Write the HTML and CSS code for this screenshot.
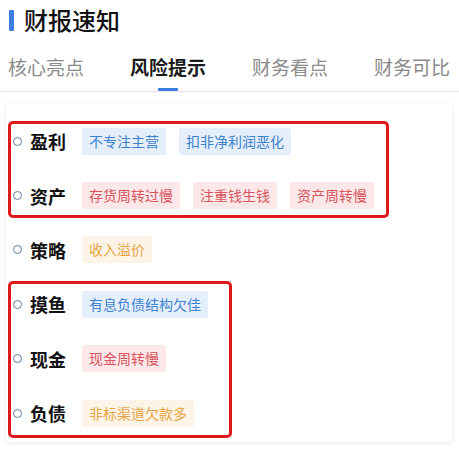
FILE: index.html
```html
<!DOCTYPE html>
<html lang="zh">
<head>
<meta charset="utf-8">
<link rel="stylesheet" href="styles.css">
</head>
<body>
<div class="page">
  <div class="header">
    <span class="header-bar"></span>
    <h1 class="title">财报速知</h1>
  </div>
  <div class="tabs">
    <div class="tab">核心亮点</div>
    <div class="tab tab-active">风险提示</div>
    <div class="tab">财务看点</div>
    <div class="tab">财务可比</div>
  </div>
  <div class="card">
    <div class="group group-a">
      <div class="row">
        <span class="dot"></span><span class="label">盈利</span>
        <div class="tags"><span class="tag tag-blue">不专注主营</span><span class="tag tag-blue">扣非净利润恶化</span></div>
      </div>
      <div class="row">
        <span class="dot"></span><span class="label">资产</span>
        <div class="tags"><span class="tag tag-red">存货周转过慢</span><span class="tag tag-red">注重钱生钱</span><span class="tag tag-red">资产周转慢</span></div>
      </div>
    </div>
    <div class="row">
      <span class="dot"></span><span class="label">策略</span>
      <div class="tags"><span class="tag tag-orange">收入溢价</span></div>
    </div>
    <div class="group group-b">
      <div class="row">
        <span class="dot"></span><span class="label">摸鱼</span>
        <div class="tags"><span class="tag tag-blue">有息负债结构欠佳</span></div>
      </div>
      <div class="row">
        <span class="dot"></span><span class="label">现金</span>
        <div class="tags"><span class="tag tag-red">现金周转慢</span></div>
      </div>
      <div class="row">
        <span class="dot"></span><span class="label">负债</span>
        <div class="tags"><span class="tag tag-orange">非标渠道欠款多</span></div>
      </div>
    </div>
  </div>
</div>
</body>
</html>
```

FILE: styles.css
```css
* { box-sizing: border-box; }
html, body { margin: 0; padding: 0; background: #ffffff; }
body {
  font-family: "Noto Sans CJK SC", "Noto Sans", sans-serif;
  color: #111;
  width: 459px;
  height: 453px;
  overflow: hidden;
}
.page { display: flex; flex-direction: column; }
.header {
  display: flex;
  align-items: center;
  gap: 10px;
  height: 40px;
  padding-left: 9px;
}
.header-bar {
  width: 5px;
  height: 21px;
  background: #3b7de0;
  border-radius: 1px;
}
.title {
  margin: 0;
  font-size: 24px;
  font-weight: 500;
  line-height: 40px;
  color: #111;
}
.tabs {
  display: flex;
  gap: 46px;
  padding-left: 8px;
  height: 52px;
  border-bottom: 1px solid #e6e6e6;
  white-space: nowrap;
}
.tab {
  position: relative;
  flex: none;
  width: 76px;
  font-size: 19px;
  color: #8a8a8a;
  padding-top: 3px;
  line-height: 48px;
}
.tab-active { color: #1a1a1a; font-weight: 700; }
.tab-active::after {
  content: "";
  position: absolute;
  left: 28px;
  bottom: 0;
  width: 20px;
  height: 3px;
  background: #3b7de0;
  border-radius: 1px;
}
.card {
  margin: 12px 7px 0 6px;
  padding: 10px 0 2px;
  background: #fff;
  box-shadow: 0 1px 4px rgba(0,0,0,0.10);
  border-radius: 2px;
}
.group { position: relative; }
.group::after {
  content: "";
  position: absolute;
  left: 2px;
  border: 3px solid #e0181b;
  border-radius: 5px;
  pointer-events: none;
}
.group-a::after { top: 7px; bottom: 5px; width: 375px; }
.group-b::after { top: 4px; bottom: 2px; width: 218px; }
.row {
  display: flex;
  align-items: center;
  height: 54.4px;
  padding-left: 7px;
}
.dot {
  flex: none;
  width: 9px;
  height: 9px;
  border: 1.5px solid #5a7ea8;
  border-radius: 50%;
}
.label {
  flex: none;
  width: 52px;
  margin-left: 8px;
  font-size: 18px;
  font-weight: 700;
  color: #111;
}
.tags { display: flex; gap: 13px; }
.tag {
  height: 27px;
  line-height: 27px;
  padding: 0 7px;
  font-size: 14px;
  border-radius: 2px;
  white-space: nowrap;
}
.tag-blue { background: #e5effb; color: #3d82cf; }
.tag-red { background: #fce8e9; color: #d8535b; }
.tag-orange { background: #fdf4e7; color: #e6a444; }
```
